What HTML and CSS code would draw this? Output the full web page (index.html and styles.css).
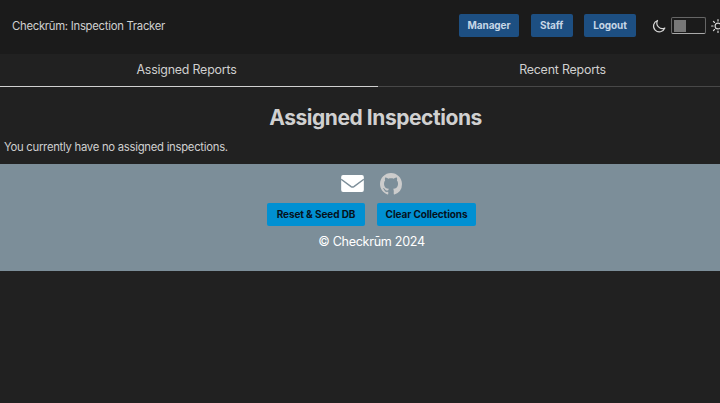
FILE: index.html
```html
<!DOCTYPE html>
<html lang="en">
<head>
<meta charset="utf-8">
<title>Checkrūm: Inspection Tracker</title>
<link rel="stylesheet" href="styles.css">
</head>
<body>
<header class="navbar">
  <a class="brand"><span>Checkrūm: Inspection Tracker</span></a>
  <nav class="nav-actions">
    <button class="btn manager"><span>Manager</span></button>
    <button class="btn staff"><span>Staff</span></button>
    <button class="btn logout"><span>Logout</span></button>
  </nav>
  <div class="theme">
    <svg class="moon" viewBox="0 0 24 24"><path d="M9.500 2.500A10 10 0 1 0 22 15.500 9.500 9.500 0 0 1 9.500 2.500Z"/></svg>
    <span class="toggle"><span class="knob"></span></span>
    <svg class="sun" viewBox="0 0 24 24"><circle cx="12" cy="12" r="5"/><path d="M12 1v2.500M12 20.500v2.500M1 12h2.500M20.500 12H23M4.200 4.200l1.800 1.800M18 18l1.800 1.800M4.200 19.800 6 18M18 6l1.800-1.800"/></svg>
  </div>
</header>
<div class="tabs">
  <div class="tab active"><span>Assigned Reports</span></div>
  <div class="tab"><span>Recent Reports</span></div>
</div>
<main>
  <h1><span>Assigned Inspections</span></h1>
  <p><span>You currently have no assigned inspections.</span></p>
</main>
<footer>
  <div class="socials">
    <svg class="mail" viewBox="0 0 24 18"><rect width="24" height="18" rx="2"/><path d="M0 4.500 10.500 12.300Q12 13.300 13.500 12.300L24 4.500"/></svg>
    <svg class="github" viewBox="0 0 16 16"><path d="M8 0C3.580 0 0 3.580 0 8c0 3.540 2.290 6.530 5.470 7.590.4.070.55-.17.55-.38 0-.19-.01-.82-.01-1.490-2.010.37-2.530-.49-2.690-.94-.09-.23-.48-.94-.82-1.130-.28-.15-.68-.52-.01-.53.63-.01 1.080.58 1.230.82.72 1.210 1.870.87 2.330.66.07-.52.28-.87.51-1.070-1.780-.2-3.640-.89-3.640-3.950 0-.87.31-1.590.82-2.150-.08-.2-.36-1.020.08-2.120 0 0 .67-.21 2.200.82.64-.18 1.320-.27 2-.27s1.360.09 2 .27c1.530-1.040 2.200-.82 2.200-.82.44 1.100.16 1.920.08 2.120.51.56.82 1.270.82 2.150 0 3.070-1.870 3.750-3.650 3.950.29.25.54.73.54 1.480 0 1.070-.01 1.930-.01 2.200 0 .21.15.46.55.38A8.010 8.010 0 0 0 16 8c0-4.420-3.580-8-8-8Z"/></svg>
  </div>
  <div class="tools">
    <button class="btn tool seed"><span>Reset &amp; Seed DB</span></button>
    <button class="btn tool clear"><span>Clear Collections</span></button>
  </div>
  <div class="copyright"><span>© Checkrūm 2024</span></div>
</footer>
</body>
</html>
```
FILE: styles.css
```css
* { box-sizing: border-box; }
html { overflow: hidden; background: #212121; }
body {
  margin: 0;
  width: 720px;
  overflow: hidden;
  background: #212121;
  color: #d0d0d0;
  font-family: Inter, "Liberation Sans", sans-serif;
}
.navbar {
  display: flex;
  align-items: center;
  height: 54px;
  padding: 0 0 3px 12px;
  background: #1b1b1b;
}
.brand { width: 447px; flex: none; font-size: 11.3px; letter-spacing: -0.27px; }
.nav-actions { display: flex; gap: 11.5px; flex: none; }
.btn {
  height: 23px;
  padding: 0;
  border: 0;
  border-radius: 2px;
  background: #1d4f82;
  color: #c6d6e6;
  font: 700 10px/23px Inter, "Liberation Sans", sans-serif;
  letter-spacing: -0.1px;
  text-align: center;
  white-space: nowrap;
}
.manager { width: 60px; }
.staff { width: 42px; }
.logout { width: 52px; }
.theme { display: flex; align-items: center; flex: none; margin-left: 16px; }
.moon, .sun {
  width: 14px;
  height: 14px;
  flex: none;
  fill: none;
  stroke: #d6d6d6;
  stroke-width: 2;
  stroke-linejoin: round;
  stroke-linecap: round;
}
.toggle {
  width: 35px;
  height: 17px;
  margin: 0 5px;
  padding: 1.5px 2px;
  border: 1px solid #666;
  border-bottom-color: #aaa;
  border-radius: 2px;
}
.knob { display: block; width: 12px; height: 12px; background: #777; }
.tabs { display: flex; height: 33px; }
.tab {
  flex: none;
  width: 369px;
  padding-bottom: 1px;
  border-bottom: 1px solid #484848;
  font-size: 12.4px;
  letter-spacing: -0.2px;
  line-height: 31px;
  text-align: center;
}
.tab.active { width: 378px; padding-right: 5px; border-bottom-color: #d0d0d0; }
main { height: 77px; padding-top: 16px; }
h1 {
  width: 751px;
  margin: 0;
  font-size: 21px;
  letter-spacing: -0.45px;
  line-height: 29px;
  text-align: center;
}
p { margin: 5px 0 0 4px; font-size: 11.3px; letter-spacing: -0.27px; line-height: 20px; }
footer { height: 107px; padding: 8px 0 0; width: 743px; background: #7c8e99; }
.socials { display: flex; justify-content: center; align-items: center; gap: 16px; height: 23px; }
.mail { width: 23px; height: 17px; fill: #fff; }
.mail path { fill: none; stroke: #7c8e99; stroke-width: 1.5; }
.github { width: 22px; height: 22px; fill: #ccc; }
.tools { display: flex; justify-content: center; gap: 12px; margin-top: 8px; }
.tool { background: #0190d2; color: #06121d; }
.seed { width: 98px; }
.clear { width: 99px; }
.copyright { margin-top: 6px; color: #fff; font-size: 12.6px; letter-spacing: -0.3px; line-height: 20px; text-align: center; }
```
